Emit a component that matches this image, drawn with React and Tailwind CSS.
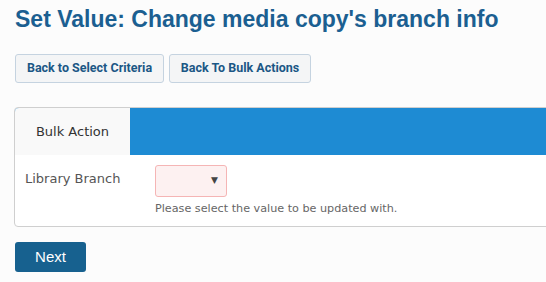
import React from 'react';

const App = () => {
  return (
    <div className="min-h-[282px] w-[546px] overflow-hidden bg-[#fcfcfc] pl-[15px] pt-[5px]">
      <h1 className="font-['Liberation_Sans',Arial,sans-serif] text-[23px] font-bold leading-[29px] text-[#1b5f91]">
        Set Value: Change media copy's branch info
      </h1>

      <div className="mt-[20px] flex gap-[5px] font-['Roboto',sans-serif] text-[12.5px] font-bold text-[#1b5785]">
        <button className="h-[29px] w-[149px] rounded-[3px] border border-[#c5d3e0] bg-[#f4f5f6]">
          Back to Select Criteria
        </button>
        <button className="h-[29px] w-[142px] rounded-[3px] border border-[#c5d3e0] bg-[#f4f5f6]">
          Back To Bulk Actions
        </button>
      </div>

      <div className="mt-[24px] -ml-px mr-[-8px] rounded-[4px] border border-[#cfcfcf] bg-white font-['DejaVu_Sans',Verdana,sans-serif] text-[#555]">
        <div className="flex h-[47px] rounded-t-[4px] bg-[#1e8bd3]">
          <div className="flex w-[115px] items-center justify-center rounded-tl-[4px] bg-[#f9f9f9] text-[13px] text-[#333]">
            Bulk Action
          </div>
        </div>
        <div className="flex pb-[8px] pt-[10px]">
          <div className="w-[140px] pl-[10px] pt-[4px] text-[13px]">Library Branch</div>
          <div>
            <div className="flex h-[32px] w-[72px] items-center justify-end rounded-[3px] border border-[#f5b5b5] bg-[#fdf1f1] pr-[8px] text-[9px] text-[#444]">
              ▼
            </div>
            <div className="mt-[4px] text-[11.2px] text-[#666]">Please select the value to be updated with.</div>
          </div>
        </div>
      </div>

      <button className="mt-[15px] h-[30px] w-[71px] rounded-[3px] bg-[#17618f] font-['Liberation_Sans',Arial,sans-serif] text-[15px] text-white">
        Next
      </button>
    </div>
  );
};

export default App;
